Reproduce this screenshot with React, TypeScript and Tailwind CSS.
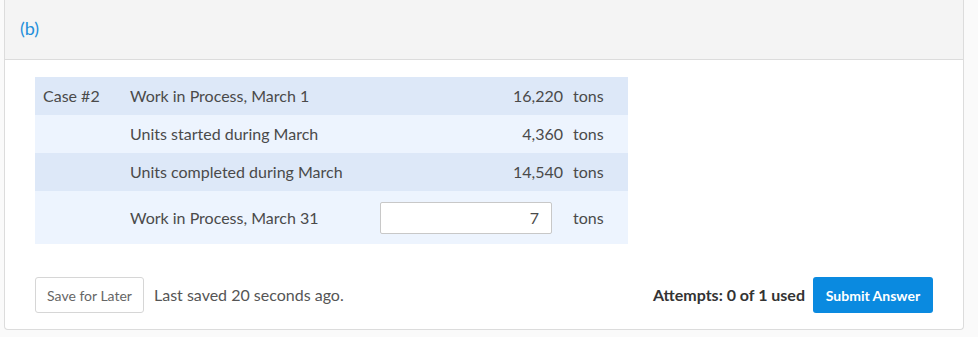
import { useState } from "react";

const rows = [
  { caseLabel: "Case #2", label: "Work in Process, March 1", value: "16,220", shade: "bg-[#dde8f8]" },
  { caseLabel: "", label: "Units started during March", value: "4,360", shade: "bg-[#edf4fe]" },
  { caseLabel: "", label: "Units completed during March", value: "14,540", shade: "bg-[#dde8f8]" },
];

function App() {
  const [answer, setAnswer] = useState("7");

  return (
    <div className="min-h-[337px] bg-[#fafafa] pl-[4px] font-['Lato','Noto_Sans',sans-serif] text-[#4a4a4a]">
      <div className="w-[960px] rounded-b-[4px] border border-t-0 border-[#dcdcdc] bg-white">
        {/* Part header */}
        <div className="flex h-[60px] items-center border-b border-[#dcdcdc] bg-[#f4f4f4] pl-[15px] pb-[2px]">
          <span className="text-[18px] text-[#1f8fdb]">(b)</span>
        </div>

        <div className="px-[30px] pt-[17px] pb-[16px]">
          <table className="border-collapse text-[16px]">
            <tbody>
              {rows.map((r) => (
                <tr key={r.label} className={`h-[38px] ${r.shade}`}>
                  <td className="w-[87px] pl-[8px]">{r.caseLabel}</td>
                  <td className="w-[250px] pl-[8px]">{r.label}</td>
                  <td className="w-[191px] pr-[0px] text-right">{r.value}</td>
                  <td className="w-[65px] pl-[10px]">tons</td>
                </tr>
              ))}
              <tr className="h-[53px] bg-[#edf4fe]">
                <td className="pl-[8px]"></td>
                <td className="pl-[8px]">Work in Process, March 31</td>
                <td className="text-right">
                  <input
                    value={answer}
                    onChange={(e) => setAnswer(e.target.value)}
                    className="mr-[11px] h-[32px] w-[172px] rounded-[2px] border border-[#c8c8c8] bg-white px-[12px] text-right text-[16px] text-[#4a4a4a] outline-none"
                  />
                </td>
                <td className="pl-[10px]">tons</td>
              </tr>
            </tbody>
          </table>

          <div className="mt-[33px] flex items-center">
            <button className="h-[36px] w-[109px] rounded-[3px] border border-[#d6d6d6] bg-white text-[14px] text-[#666]">
              Save for Later
            </button>
            <span className="ml-[10px] text-[16px] text-[#555]">Last saved 20 seconds ago.</span>
            <span className="ml-auto mr-[8px] text-[16px] font-bold text-[#333]">Attempts: 0 of 1 used</span>
            <button className="h-[36px] w-[120px] rounded-[3px] bg-[#0a8ae0] text-[14px] font-bold text-white">
              Submit Answer
            </button>
          </div>
        </div>
      </div>
    </div>
  );
}

export default App;
